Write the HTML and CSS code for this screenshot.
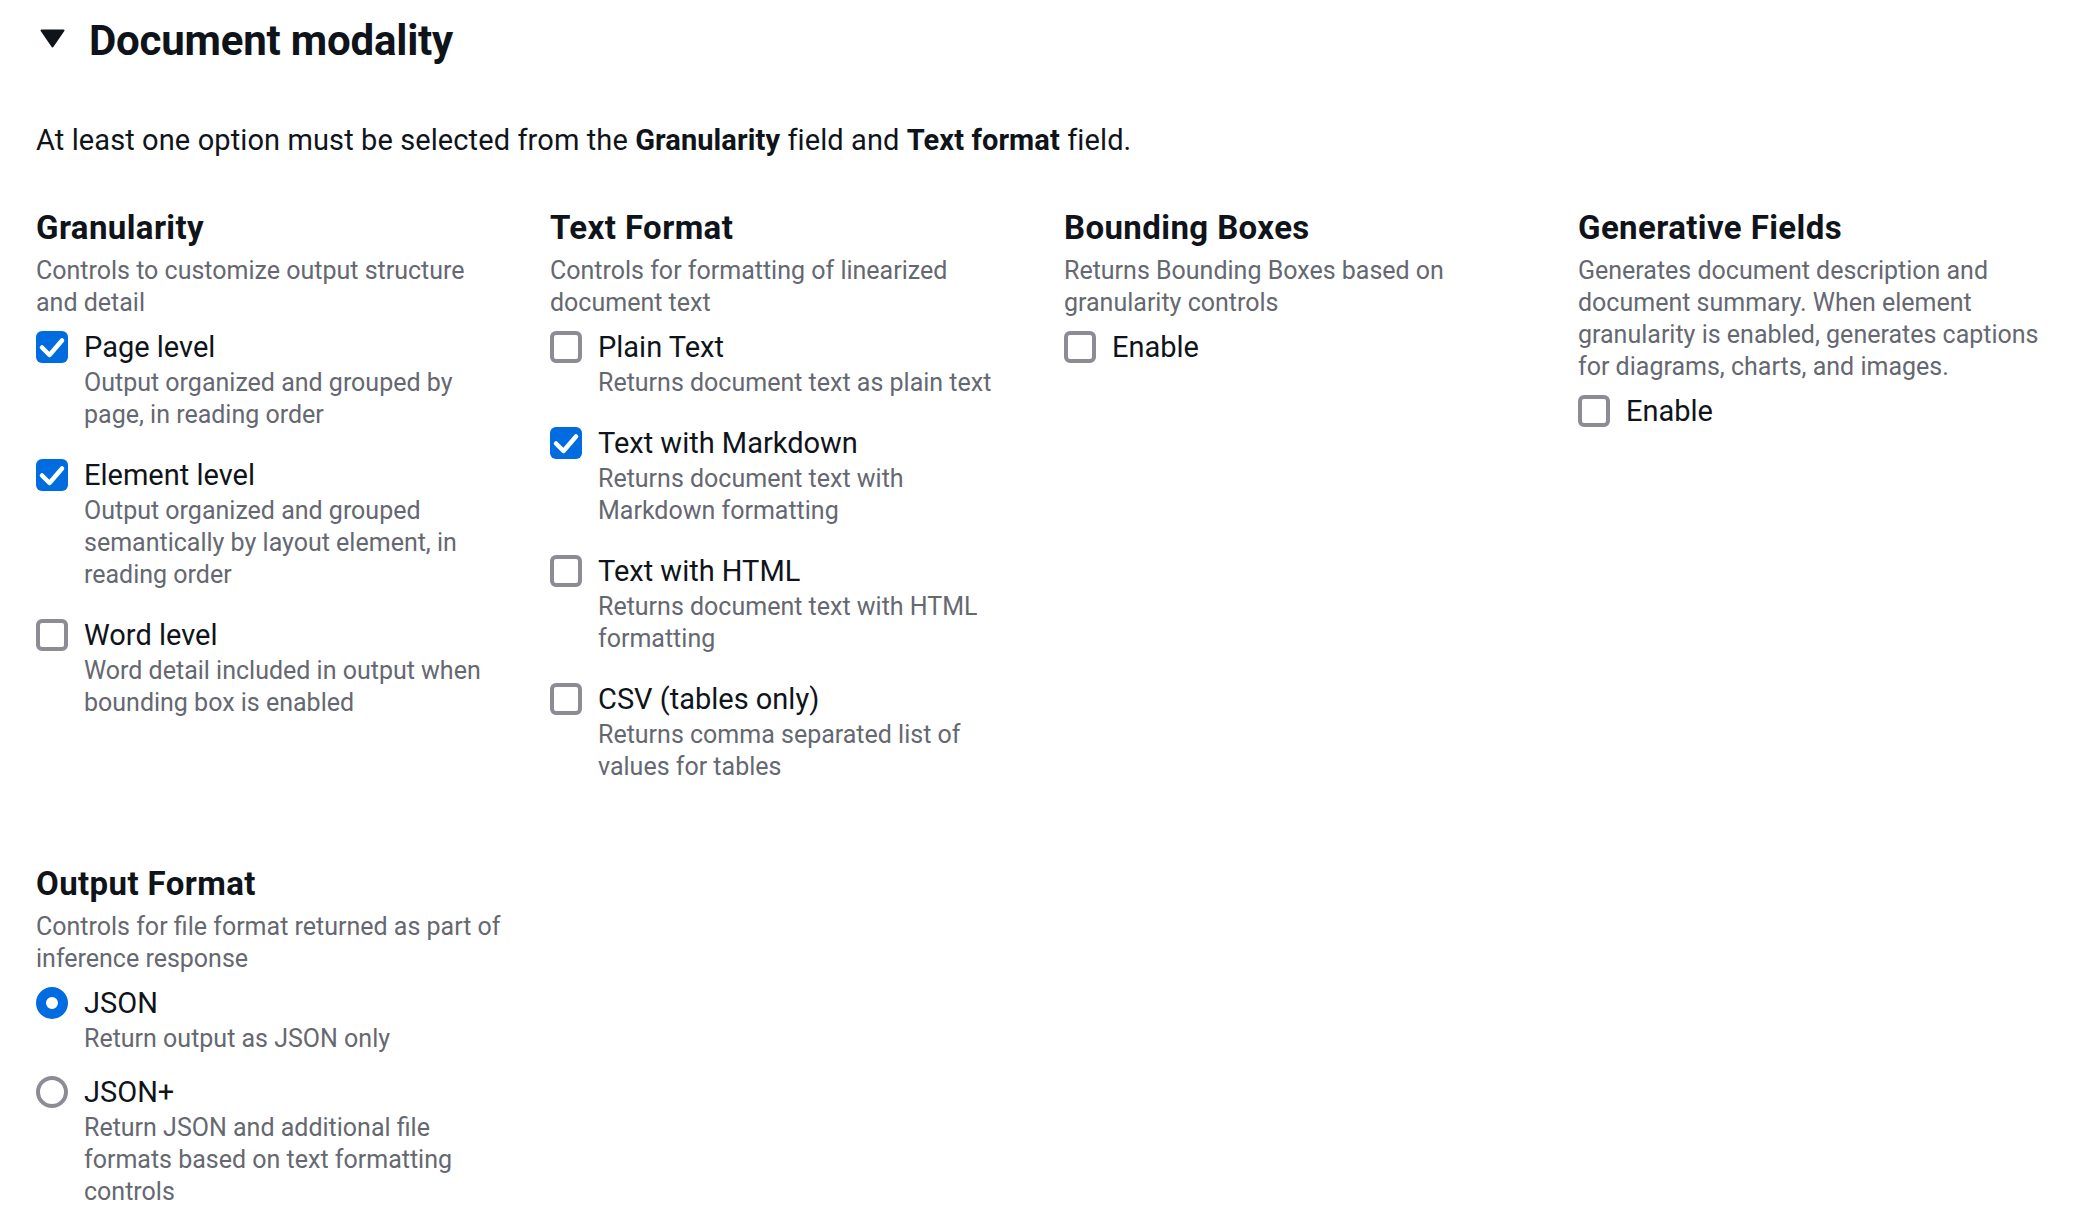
FILE: index.html
```html
<!DOCTYPE html>
<html lang="en">
<head>
<meta charset="utf-8">
<title>Document modality</title>
<link rel="stylesheet" href="styles.css">
</head>
<body>
<main class="page">
  <header class="section-header">
    <svg class="caret" viewBox="0 0 25 19" width="25" height="19" aria-hidden="true">
      <path d="M1.5 1.5 L23.5 1.5 L12.5 17.5 Z" fill="#0f141a" stroke="#0f141a" stroke-width="2" stroke-linejoin="round"/>
    </svg>
    <h2 class="section-title">Document modality</h2>
  </header>

  <p class="intro">At least one option must be selected from the <b>Granularity</b> field and <b>Text format</b> field.</p>

  <div class="grid">
    <section class="field">
      <h3 class="field-title">Granularity</h3>
      <p class="field-desc">Controls to customize output structure and detail</p>
      <div class="options">
        <div class="option">
          <span class="box checked"><svg viewBox="0 0 32 32"><polyline points="6,16.5 13.5,24 26,9.5"/></svg></span>
          <div class="opt-text"><div class="opt-label">Page level</div><div class="opt-desc">Output organized and grouped by page, in reading order</div></div>
        </div>
        <div class="option">
          <span class="box checked"><svg viewBox="0 0 32 32"><polyline points="6,16.5 13.5,24 26,9.5"/></svg></span>
          <div class="opt-text"><div class="opt-label">Element level</div><div class="opt-desc">Output organized and grouped semantically by layout element, in reading order</div></div>
        </div>
        <div class="option">
          <span class="box"></span>
          <div class="opt-text"><div class="opt-label">Word level</div><div class="opt-desc">Word detail included in output when bounding box is enabled</div></div>
        </div>
      </div>
    </section>

    <section class="field">
      <h3 class="field-title">Text Format</h3>
      <p class="field-desc">Controls for formatting of linearized document text</p>
      <div class="options">
        <div class="option">
          <span class="box"></span>
          <div class="opt-text"><div class="opt-label">Plain Text</div><div class="opt-desc">Returns document text as plain text</div></div>
        </div>
        <div class="option">
          <span class="box checked"><svg viewBox="0 0 32 32"><polyline points="6,16.5 13.5,24 26,9.5"/></svg></span>
          <div class="opt-text"><div class="opt-label">Text with Markdown</div><div class="opt-desc">Returns document text with Markdown formatting</div></div>
        </div>
        <div class="option">
          <span class="box"></span>
          <div class="opt-text"><div class="opt-label">Text with HTML</div><div class="opt-desc">Returns document text with HTML formatting</div></div>
        </div>
        <div class="option">
          <span class="box"></span>
          <div class="opt-text"><div class="opt-label">CSV (tables only)</div><div class="opt-desc">Returns comma separated list of values for tables</div></div>
        </div>
      </div>
    </section>

    <section class="field">
      <h3 class="field-title">Bounding Boxes</h3>
      <p class="field-desc">Returns Bounding Boxes based on granularity controls</p>
      <div class="options">
        <div class="option">
          <span class="box"></span>
          <div class="opt-text"><div class="opt-label">Enable</div></div>
        </div>
      </div>
    </section>

    <section class="field">
      <h3 class="field-title">Generative Fields</h3>
      <p class="field-desc">Generates document description and document summary. When element granularity is enabled, generates captions for diagrams, charts, and images.</p>
      <div class="options">
        <div class="option">
          <span class="box"></span>
          <div class="opt-text"><div class="opt-label">Enable</div></div>
        </div>
      </div>
    </section>

    <section class="field">
      <h3 class="field-title">Output Format</h3>
      <p class="field-desc">Controls for file format returned as part of inference response</p>
      <div class="options radios">
        <div class="option">
          <span class="radio checked"></span>
          <div class="opt-text"><div class="opt-label">JSON</div><div class="opt-desc">Return output as JSON only</div></div>
        </div>
        <div class="option">
          <span class="radio"></span>
          <div class="opt-text"><div class="opt-label">JSON+</div><div class="opt-desc">Return JSON and additional file formats based on text formatting controls</div></div>
        </div>
      </div>
    </section>
  </div>
</main>
</body>
</html>
```

FILE: styles.css
```css
* { box-sizing: border-box; }

html, body {
  margin: 0;
  padding: 0;
  background: #ffffff;
}

body {
  font-family: Roboto, "Liberation Sans", Arial, sans-serif;
  color: #0f141a;
}

.page {
  padding: 17px 0 0 36px;
}

.section-header {
  display: flex;
  align-items: center;
  gap: 24px;
  padding-left: 4px;
  height: 48px;
}

.caret {
  display: block;
  flex: none;
  margin-bottom: 5px;
}

.section-title {
  margin: 0;
  font-size: 42px;
  line-height: 48px;
  font-weight: 700;
  letter-spacing: -0.2px;
}

.intro {
  margin: 55px 0 0;
  font-size: 29px;
  line-height: 40px;
  letter-spacing: 0.1px;
}

.intro b { font-weight: 700; }

.grid {
  display: grid;
  grid-template-columns: repeat(4, 470px);
  column-gap: 44px;
  row-gap: 81px;
  margin-top: 48px;
  align-items: start;
}

.field-title {
  margin: 0 0 7px;
  font-size: 33px;
  line-height: 40px;
  font-weight: 700;
  letter-spacing: 0.4px;
}

.field-desc {
  margin: 0;
  font-size: 25px;
  line-height: 32px;
  color: #656871;
}

.options {
  display: flex;
  flex-direction: column;
  gap: 24px;
  margin-top: 8px;
}

.options.radios { gap: 17px; }

.option {
  display: flex;
  align-items: flex-start;
  gap: 16px;
}

.box {
  flex: none;
  width: 32px;
  height: 32px;
  margin-top: 4px;
  border: 4px solid #8c8c94;
  border-radius: 6px;
  background: #fff;
  display: block;
}

.box.checked {
  border: none;
  background: #006ce0;
}

.box svg {
  display: block;
  width: 32px;
  height: 32px;
}

.box svg polyline {
  fill: none;
  stroke: #fff;
  stroke-width: 4.5;
  stroke-linecap: round;
  stroke-linejoin: round;
}

.radio {
  flex: none;
  width: 32px;
  height: 32px;
  margin-top: 4px;
  border: 4px solid #8c8c94;
  border-radius: 50%;
  background: #fff;
  display: block;
}

.radio.checked {
  border: 10px solid #006ce0;
}

.opt-text {
  min-width: 0;
  max-width: 414px;
}

.opt-label {
  font-size: 29px;
  line-height: 40px;
  color: #0f141a;
}

.opt-desc {
  font-size: 25px;
  line-height: 32px;
  color: #656871;
}
```
